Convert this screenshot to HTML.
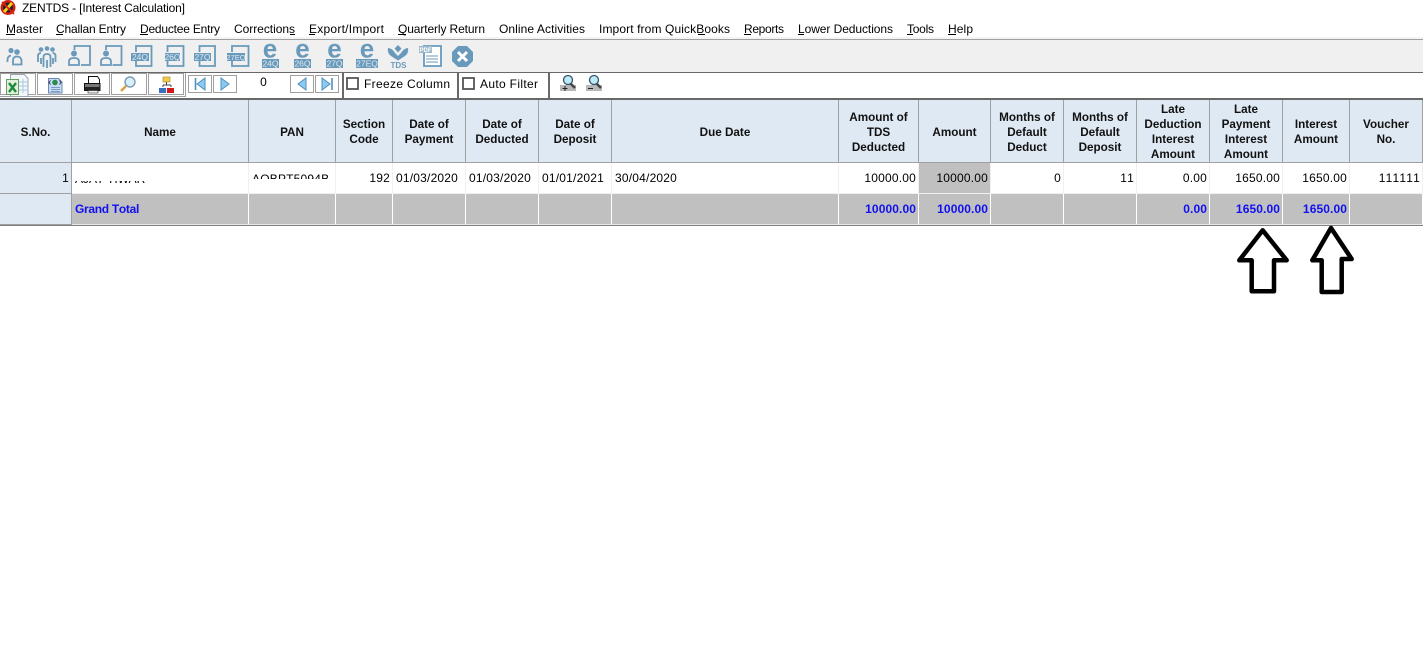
<!DOCTYPE html>
<html><head><meta charset="utf-8"><title>ZENTDS - [Interest Calculation]</title>
<style>
html,body{margin:0;padding:0;background:#fff;width:1423px;height:660px;overflow:hidden;font-family:"Liberation Sans",sans-serif}
svg{position:absolute;left:0;top:0}
table{position:absolute;left:0;top:100px;width:1423px;border-collapse:separate;border-spacing:0;table-layout:fixed;font-size:12px;letter-spacing:.2px;color:#000;font-kerning:none}
td,th{box-sizing:border-box;padding:0;overflow:hidden;white-space:nowrap}
th{height:63px;background:#dfe9f3;border-right:1px solid #a0a0a0;font-weight:bold;font-size:11.7px;font-kerning:normal;text-align:center;line-height:15px;color:#111;letter-spacing:0;padding-top:2px}
.h th{border-bottom:1px solid #a0a0a0}
.d td{height:31px;border-right:1px solid #f0f0f0;border-bottom:1px solid #f0f0f0;padding:0 2px}
.t td{height:31px;background:#c0c0c0;border-right:1px solid #fff;border-bottom:1px solid #e8e8e8;font-weight:bold;color:#1010f0;padding:0 2px;letter-spacing:.1px}
.r{text-align:right}
.l{text-align:left;padding-left:3px!important}
.t td.l{letter-spacing:-.3px}
td.s{background:#dfe9f3!important;border-right:1px solid #a0a0a0!important;border-bottom:1px solid #a0a0a0!important}
.clipn{position:absolute;left:75px;top:181px;width:70px;height:2px;overflow:hidden;font-size:12px;line-height:12px}
.clipn span{position:absolute;top:-8px;left:0;white-space:nowrap}
.clipp{position:absolute;left:252px;top:174px;width:76px;height:5px;overflow:hidden;font-size:12px;line-height:12px;letter-spacing:.2px}
.clipp span{position:absolute;top:-1px;left:0;white-space:nowrap}
.line{position:absolute;left:0;width:1423px}
</style></head><body>
<div class="line" style="top:37px;height:2px;background:#f4f4f4"></div>
<div class="line" style="top:39px;height:1px;background:#a0a0a0"></div>
<div class="line" style="top:40px;height:32px;background:#f0f0f0"></div>
<div class="line" style="top:72px;height:1px;background:#696969"></div>
<div class="line" style="top:98px;height:2px;background:#696969"></div>
<div class="line" style="top:225px;height:1px;background:#808080"></div>
<table>
<colgroup><col style="width:72px"><col style="width:177px"><col style="width:87px"><col style="width:57px"><col style="width:73px"><col style="width:73px"><col style="width:73px"><col style="width:227px"><col style="width:80px"><col style="width:72px"><col style="width:73px"><col style="width:73px"><col style="width:73px"><col style="width:73px"><col style="width:67px"><col style="width:73px"></colgroup>
<tr class="h"><th>S.No.</th><th>Name</th><th>PAN</th><th>Section<br>Code</th><th>Date of<br>Payment</th><th>Date of<br>Deducted</th><th>Date of<br>Deposit</th><th>Due Date</th><th>Amount of<br>TDS<br>Deducted</th><th>Amount</th><th>Months of<br>Default<br>Deduct</th><th>Months of<br>Default<br>Deposit</th><th>Late<br>Deduction<br>Interest<br>Amount</th><th>Late<br>Payment<br>Interest<br>Amount</th><th>Interest<br>Amount</th><th>Voucher<br>No.</th></tr>
<tr class="d"><td class="r s">1</td><td></td><td></td><td class="r">192</td><td class="l">01/03/2020</td><td class="l">01/03/2020</td><td class="l">01/01/2021</td><td class="l">30/04/2020</td><td class="r">10000.00</td><td class="r" style="background:#c0c0c0">10000.00</td><td class="r">0</td><td class="r">11</td><td class="r">0.00</td><td class="r">1650.00</td><td class="r">1650.00</td><td class="r">111111</td></tr>
<tr class="t"><td class="s"></td><td class="l">Grand Total</td><td></td><td></td><td></td><td></td><td></td><td></td><td class="r">10000.00</td><td class="r">10000.00</td><td></td><td></td><td class="r">0.00</td><td class="r">1650.00</td><td class="r">1650.00</td><td></td></tr>
</table>
<div class="clipn"><span>AJAY TIWARI</span></div>
<div class="clipp"><span>AQBPT5094B</span></div>

<svg width="1423" height="660" viewBox="0 0 1423 660" font-family="Liberation Sans, sans-serif">
<!-- app icon -->
<circle cx="8" cy="7.500" r="7.500" fill="#d02010"/><circle cx="8" cy="7.500" r="5" fill="#222"/><path d="M4 12L12 3" stroke="#f0d020" stroke-width="3"/><path d="M2 2L14 14" stroke="#e02010" stroke-width="1.800"/>
<text x="22" y="12" font-size="12" textLength="163" fill="#000">ZENTDS - [Interest Calculation]</text>
<!-- menu -->
<g font-size="12" fill="#000">
<text x="6" y="33" textLength="37">Master</text>
<text x="56" y="33" textLength="70">Challan Entry</text>
<text x="140" y="33" textLength="80">Deductee Entry</text>
<text x="234" y="33" textLength="61">Corrections</text>
<text x="309" y="33" textLength="75">Export/Import</text>
<text x="398" y="33" textLength="87">Quarterly Return</text>
<text x="499" y="33" textLength="86">Online Activities</text>
<text x="599" y="33" textLength="131">Import from QuickBooks</text>
<text x="744" y="33" textLength="40">Reports</text>
<text x="798" y="33" textLength="95">Lower Deductions</text>
<text x="907" y="33" textLength="27">Tools</text>
<text x="948" y="33" textLength="25">Help</text>
</g>
<g fill="#000">
<rect x="6" y="34" width="9" height="1"/><rect x="56" y="34" width="7" height="1"/><rect x="140" y="34" width="8" height="1"/><rect x="290" y="34" width="5" height="1"/><rect x="309" y="34" width="6" height="1"/><rect x="398" y="34" width="8" height="1"/><rect x="698" y="34" width="7" height="1"/><rect x="744" y="34" width="7" height="1"/><rect x="798" y="34" width="6" height="1"/><rect x="907" y="34" width="6" height="1"/><rect x="948" y="34" width="8" height="1"/>
</g>
<!-- top toolbar icons -->
<g fill="none" stroke="#6a9abb" stroke-width="1.800">
<circle cx="11" cy="50.500" r="2.600" fill="#6a9abb" stroke="none"/><circle cx="17" cy="52" r="2.800" fill="#6a9abb" stroke="none"/>
<path d="M7.500 62q-.5-6 3.500-6.500M13 64.500v-4q0-4 4-4t4.500 4v4z"/>
<circle cx="41" cy="49.500" r="2.300" fill="#6a9abb" stroke="none"/><circle cx="47" cy="48.500" r="2.300" fill="#6a9abb" stroke="none"/><circle cx="52.500" cy="49.500" r="2.300" fill="#6a9abb" stroke="none"/>
<path d="M38 62v-6q0-3 3-3M55.500 62v-6q0-3-3-3M43.500 67v-10q0-3 3.500-3t3.500 3v10M47 60v8M41 58v6M53 58v6"/>
<path d="M74.500 50v-4h15.500v19h-9M106 50v-4h15.500v19h-9" stroke-width="1.800"/>
<circle cx="74" cy="53.500" r="3" fill="#6a9abb" stroke="none"/><path d="M69 65v-3.500q0-3.500 5-3.500t5 3.500v3.500z"/>
<circle cx="106" cy="53.500" r="3" fill="#6a9abb" stroke="none"/><path d="M101 65v-3.500q0-3.500 5-3.500t5 3.500v3.500z"/>
<path d="M136 52v-6h15.500v20H136v-5M167.500 52v-6h16v20h-16v-5M199.500 52v-6h15.500v20h-15.500v-5M232 52v-6h16.500v20H232v-5" stroke-width="1.800"/>
</g>
<g fill="#6a9abb">
<rect x="131" y="53" width="18" height="8"/><rect x="165" y="53" width="15" height="8"/><rect x="194" y="53" width="17" height="8"/><rect x="227" y="53" width="18" height="8"/>
<rect x="262" y="59" width="17" height="9"/><rect x="294" y="59" width="17" height="9"/><rect x="326" y="59" width="17" height="9"/><rect x="356" y="59" width="22" height="9"/>
</g>
<g font-size="8.500" fill="#dfe9f0" text-anchor="middle">
<text x="140" y="60">24Q</text><text x="172.500" y="60">26Q</text><text x="202.500" y="60">27Q</text><text x="236" y="60" font-size="7.500">27EQ</text>
<text x="270.500" y="66.500">24Q</text><text x="302.500" y="66.500">26Q</text><text x="334.500" y="66.500">27Q</text><text x="367" y="66.500">27EQ</text>
</g>
<g font-size="26" font-weight="bold" fill="#6a9abb" text-anchor="middle">
<text x="270" y="57.500">e</text><text x="302.500" y="57.500">e</text><text x="334.500" y="57.500">e</text><text x="367" y="57.500">e</text>
</g>
<!-- TDS -->
<path d="M398 45l3.500 3.500-3.500 4-3.500-4zM388 48q4 0 7 5l3 3 3-3q3-5 7-5 1 5-3 8l-7 4.500-7-4.500q-4-3-3-8z" fill="#6a9abb"/>
<text x="398.500" y="68" font-size="8" font-weight="bold" fill="#6a9abb" text-anchor="middle">TDS</text>
<!-- PDF -->
<path d="M424 46h17v20h-17z" fill="#fff" stroke="#6a9abb" stroke-width="1.800"/>
<rect x="419" y="46" width="13" height="7" fill="#9db8cb"/>
<text x="425.500" y="52" font-size="6" font-weight="bold" fill="#fff" text-anchor="middle">PDF</text>
<path d="M426 56h12M426 59h12M426 62h12" stroke="#6a9abb"/>
<!-- close -->
<path d="M458 46h9l6 6v9l-6 6h-9l-6-6v-9z" fill="#6a9abb"/>
<path d="M458 52l9 9M467 52l-9 9" stroke="#fff" stroke-width="3"/>
<!-- second toolbar buttons -->
<g fill="#fff" stroke="#a0a0a0">
<rect x="37.500" y="73.500" width="35" height="21"/><rect x="74.500" y="73.500" width="35" height="21"/><rect x="111.500" y="73.500" width="35" height="21"/><rect x="148.500" y="73.500" width="35" height="21"/>
<rect x="188.500" y="75.500" width="23" height="17"/><rect x="213.500" y="75.500" width="23" height="17"/><rect x="290.500" y="75.500" width="23" height="17"/><rect x="315.500" y="75.500" width="23" height="17"/>
<rect x="0.500" y="73.500" width="35" height="21"/>
</g>
<path d="M185.500 73v24M186 96.500H0" stroke="#a0a0a0" fill="none"/>
<rect x="342" y="73" width="2" height="25" fill="#696969"/><rect x="457" y="73" width="2" height="25" fill="#696969"/><rect x="548" y="73" width="2" height="25" fill="#696969"/>
<!-- excel -->
<path d="M10.500 74.500h14l3.500 4v18H10.500z" fill="#f4f7fa" stroke="#9aa6b0"/>
<path d="M18 82h10M18 86h10M18 90h10M23 79v14" stroke="#a8c8e0"/>
<rect x="6.500" y="79.500" width="12" height="15" fill="#e3efdc" stroke="#62a05e"/>
<path d="M9 83l7 9M16 83l-7 9" stroke="#1f8a3c" stroke-width="2.400"/>
<!-- web doc -->
<path d="M48.500 78.500h10l3.500 3.500v11H48.500z" fill="#c8dcf2" stroke="#6a88b4"/>
<circle cx="55" cy="82.500" r="2.800" fill="#2a8a50"/><path d="M50.500 80.500l-1.500 2 1.500 2M59.500 80.500l1.500 2-1.500 2" stroke="#335" fill="none"/>
<path d="M51 87.500h9M51 89.500h9M51 91.500h9" stroke="#7a98c0"/>
<!-- printer -->
<path d="M88.500 76.500h9l2 3v4h-11z" fill="#fff" stroke="#111"/>
<path d="M84.500 83.500h15.500v7H84.500z" fill="#777" stroke="#111"/><rect x="85" y="87" width="15" height="3.500" fill="#222"/><path d="M88 90.500h10v2.500H88z" fill="#eee" stroke="#111" stroke-width=".6"/>
<!-- search -->
<circle cx="130" cy="82" r="5" fill="#d8eff9" stroke="#7c9cb4" stroke-width="1.400"/>
<path d="M126 86l-5 5" stroke="#d8a040" stroke-width="2.400"/>
<!-- tree -->
<rect x="163" y="77" width="7" height="5" fill="#f2c94c" stroke="#a88820" stroke-width=".6"/>
<path d="M166.500 82v3M163 85h8M163 85v2M171 85v2" stroke="#444" fill="none"/>
<rect x="159" y="88" width="7" height="5" fill="#3a70c0"/><rect x="167" y="88" width="7" height="5" fill="#d01818"/>
<!-- nav -->
<g fill="#8ccaf0" stroke="#4f8fbe">
<path d="M205 78v12l-8-6z"/><path d="M195.500 78v12" stroke-width="1.600"/>
<path d="M221 78v12l8-6z"/>
<path d="M306 78v12l-8-6z"/>
<path d="M322 78v12l8-6z"/><path d="M332 78v12" stroke-width="1.600"/>
</g>
<text x="263.500" y="86" font-size="12" text-anchor="middle" fill="#000">0</text>
<!-- checkboxes -->
<rect x="347" y="78" width="11" height="11" fill="#fff" stroke="#555" stroke-width="1.800"/>
<rect x="463" y="78" width="11" height="11" fill="#fff" stroke="#555" stroke-width="1.800"/>
<text x="364" y="88" font-size="12" textLength="86" fill="#000">Freeze Column</text>
<text x="480" y="88" font-size="12" textLength="58" fill="#000">Auto Filter</text>
<!-- zoom icons -->
<g>
<rect x="560" y="85" width="16" height="6" fill="#b8b8b8"/><path d="M565 86v5M562.500 88.500h5" stroke="#222"/>
<path d="M569 82l6 6" stroke="#444" stroke-width="2.400"/><circle cx="568" cy="80" r="4.500" fill="#bdeaf6" stroke="#34506a" stroke-width="1.300"/>
<rect x="586" y="85" width="16" height="6" fill="#b8b8b8"/><path d="M588 88.500h5" stroke="#222"/>
<path d="M595 82l6 6" stroke="#444" stroke-width="2.400"/><circle cx="594" cy="80" r="4.500" fill="#bdeaf6" stroke="#34506a" stroke-width="1.300"/>
</g>
<!-- arrows -->
<g fill="#fff" stroke="#000" stroke-width="4.500" stroke-linejoin="round">
<path d="M1262.700 230.300L1239.300 260.300H1251.700V291.300H1274V260.300H1286.700Z"/>
<path d="M1331 228L1312.300 260.300H1321.700V292H1341.700V259H1351.700Z"/>
</g>
</svg>
</body></html>
